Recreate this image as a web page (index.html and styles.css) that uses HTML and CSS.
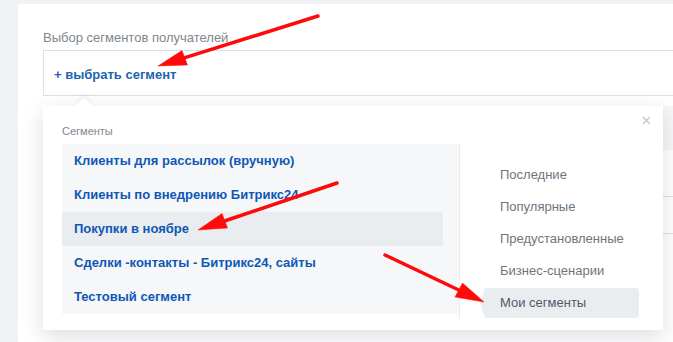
FILE: index.html
```html
<!DOCTYPE html>
<html lang="ru">
<head>
<meta charset="utf-8">
<title>Выбор сегментов</title>
<link rel="stylesheet" href="styles.css">
</head>
<body>
<div class="page">
  <div class="card">
    <div class="field-label">Выбор сегментов получателей</div>
    <div class="selector">
      <span class="add-link">+ выбрать сегмент</span>
    </div>
    <div class="under">
      <div class="under-band"></div>
      <div class="under-row tall"></div>
      <div class="under-row"></div>
    </div>
  </div>

  <div class="popup">
    <span class="popup-close">
      <svg width="9" height="9" viewBox="0 0 9 9"><path d="M1 1L8 8M8 1L1 8" stroke="#c3c8ce" stroke-width="1.4" fill="none"/></svg>
    </span>
    <div class="popup-title">Сегменты</div>
    <div class="popup-body">
      <div class="seg-list">
        <div class="seg-item">Клиенты для рассылок (вручную)</div>
        <div class="seg-item">Клиенты по внедрению Битрикс24</div>
        <div class="seg-item active">Покупки в ноябре</div>
        <div class="seg-item">Сделки -контакты - Битрикс24, сайты</div>
        <div class="seg-item">Тестовый сегмент</div>
      </div>
      <div class="tabs">
        <div class="tab">Последние</div>
        <div class="tab">Популярные</div>
        <div class="tab">Предустановленные</div>
        <div class="tab">Бизнес-сценарии</div>
        <div class="tab selected">Мои сегменты</div>
      </div>
    </div>
  </div>

  <svg class="annotations" width="673" height="342" viewBox="0 0 673 342">
    <g fill="#ff0a0a" stroke="#ff0a0a">
      <line x1="318" y1="16" x2="185" y2="57.7" stroke-width="3.5" stroke-linecap="round"/>
      <polygon points="158,66 187.5,65 182,50.5" stroke-width="0.5"/>
      <line x1="337" y1="183" x2="224.5" y2="221" stroke-width="3.5" stroke-linecap="round"/>
      <polygon points="198,230 227.5,228 222,213.5" stroke-width="0.5"/>
      <line x1="385" y1="255" x2="458.7" y2="290" stroke-width="3.5" stroke-linecap="round"/>
      <polygon points="484,302 455,297 462.5,283" stroke-width="0.5"/>
    </g>
  </svg>
</div>
</body>
</html>
```

FILE: styles.css
```css
html, body {
  margin: 0;
  padding: 0;
}
body {
  background: #eef2f4;
  font-family: "Liberation Sans", Arial, sans-serif;
  width: 673px;
  height: 342px;
  overflow: hidden;
}
.page {
  position: relative;
  width: 673px;
  height: 342px;
  padding: 4px 0 0 18px;
  box-sizing: border-box;
  overflow: hidden;
}
.card {
  background: #fff;
  height: 400px;
  padding: 25px 0 0 25px;
  box-sizing: border-box;
}
.field-label {
  font-size: 13px;
  line-height: 17px;
  color: #80868e;
  margin-bottom: 4px;
}
.selector {
  height: 44px;
  border: 1px solid #dfe0e3;
  border-right: none;
  display: flex;
  align-items: center;
  padding-left: 10px;
}
.add-link {
  font-size: 13px;
  font-weight: bold;
  color: #2264ad;
  position: relative;
  top: 1px;
}
.under {
  margin-top: 10px;
}
.under-band {
  height: 44px;
  background: #f5f7f8;
}
.under-row {
  height: 36px;
  border-bottom: 1px solid #dfe0e3;
}
.under-row.tall {
  height: 46px;
}
.popup {
  position: absolute;
  left: 43px;
  top: 106px;
  width: 620px;
  height: 224px;
  background: #fff;
  box-shadow: 0 7px 21px rgba(83, 92, 105, 0.2);
  padding: 18px 24px 11px 19px;
  box-sizing: border-box;
}
.popup::before {
  content: "";
  position: absolute;
  left: 35px;
  top: -6px;
  width: 12px;
  height: 12px;
  background: #fff;
  transform: rotate(45deg);
  box-shadow: -3px -3px 5px rgba(83, 92, 105, 0.06);
}
.popup-close {
  position: absolute;
  right: 12px;
  top: 10px;
  width: 9px;
  height: 9px;
  display: block;
}
.popup-close svg {
  display: block;
}
.popup-title {
  font-size: 11px;
  line-height: 14px;
  color: #80868e;
  margin-bottom: 6px;
}
.popup-body {
  display: flex;
  height: 175px;
}
.seg-list {
  width: 397px;
  box-sizing: border-box;
  padding-right: 16px;
  background: #f5f7f9;
  align-self: flex-start;
}
.seg-item {
  height: 34px;
  line-height: 34px;
  padding-left: 12px;
  font-size: 13px;
  font-weight: bold;
  color: #0f57b5;
  white-space: nowrap;
}
.seg-item.active {
  background: #e9edf0;
}
.tabs {
  flex: 1;
  border-left: 1px solid #e8eaed;
  padding: 16px 0 0 20px;
}
.tab {
  height: 30px;
  line-height: 30px;
  margin-bottom: 2px;
  padding-left: 20px;
  font-size: 13px;
  color: #6f757d;
}
.tab.selected {
  background: #e9edf0;
  color: #4f5966;
  border-radius: 0 3px 3px 0;
  clip-path: polygon(5px 0, 100% 0, 100% 100%, 5px 100%, 0 50%);
}
.annotations {
  position: absolute;
  left: 0;
  top: 0;
  pointer-events: none;
}
```
